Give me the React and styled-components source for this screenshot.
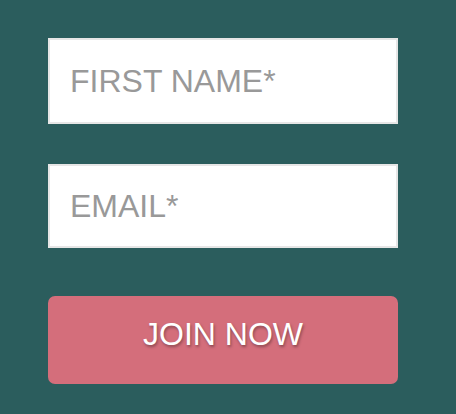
import React from 'react';
import styled, { createGlobalStyle } from 'styled-components';

const GlobalStyle = createGlobalStyle`
  html, body {
    margin: 0;
    padding: 0;
    background: #2b5d5d;
  }

  body {
    font-family: "Liberation Sans", Arial, sans-serif;
  }
`;

const Form = styled.form`
  display: flex;
  flex-direction: column;
  width: 350px;
  padding: 38px 0 0 48px;
`;

const Field = styled.input`
  box-sizing: border-box;
  width: 100%;
  height: ${props => props.h}px;
  margin-bottom: ${props => props.gap}px;
  padding: 0 0 0 20px;
  border: 2px solid #e6e6e6;
  background: #ffffff;
  font-family: inherit;
  font-size: 32px;
  color: #555555;
  outline: none;

  &::placeholder {
    color: #999999;
    opacity: 1;
  }
`;

const JoinButton = styled.button`
  box-sizing: border-box;
  width: 100%;
  height: 88px;
  padding: 0 0 12px;
  border: none;
  border-radius: 7px;
  background: #d46e7b;
  color: #ffffff;
  font-family: inherit;
  font-size: 32px;
  text-shadow: 1px 2px 3px rgba(0, 0, 0, 0.35);
  cursor: pointer;
`;

export default function App() {
  return (
    <>
      <GlobalStyle />
      <Form onSubmit={e => e.preventDefault()}>
        <Field type="text" placeholder="FIRST NAME*" h={86} gap={40} />
        <Field type="email" placeholder="EMAIL*" h={84} gap={48} />
        <JoinButton type="submit">JOIN NOW</JoinButton>
      </Form>
    </>
  );
}
